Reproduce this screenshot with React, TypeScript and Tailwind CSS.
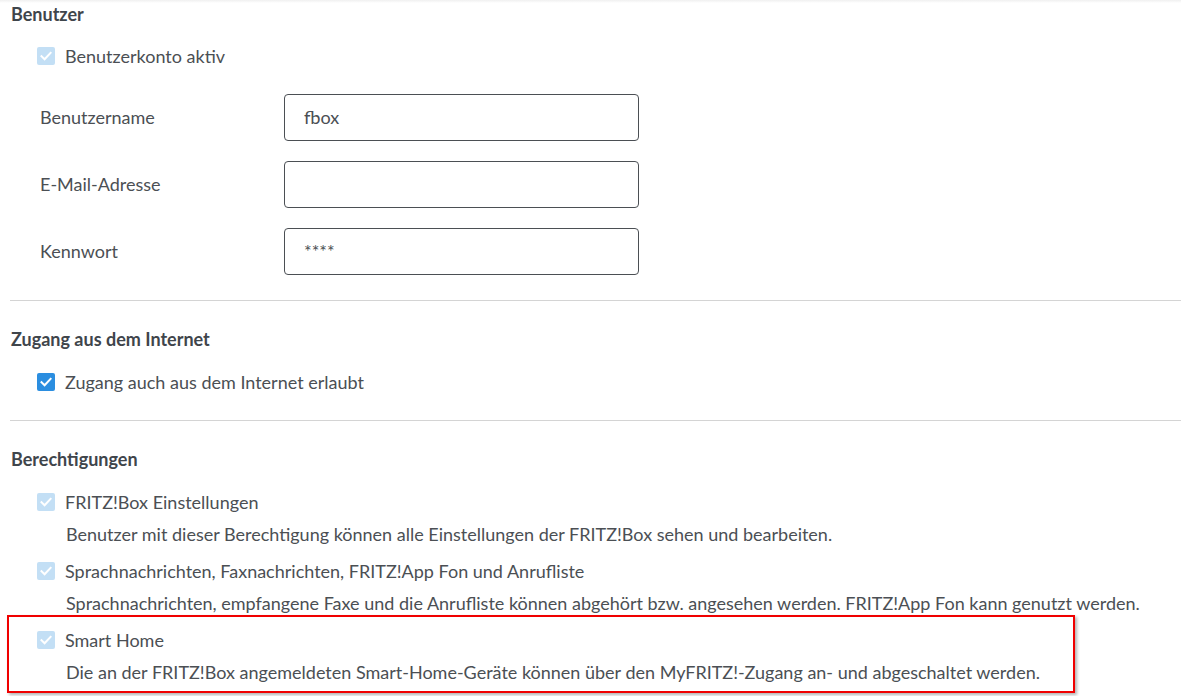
import React from "react";

const font = { fontFamily: "Lato, 'Noto Sans', sans-serif" };

function Check({ enabled }: { enabled?: boolean }) {
  return (
    <span
      className={`inline-flex h-[18px] w-[18px] shrink-0 items-center justify-center rounded-[2px] ${
        enabled ? "bg-[#2b8ee0]" : "bg-[#c3dff5]"
      }`}
    >
      <svg width="14" height="14" viewBox="0 0 14 14" fill="none">
        <path d="M2.5 7.2 L5.6 10.2 L11.6 3.8" stroke="white" strokeWidth="2" strokeLinecap="square" />
      </svg>
    </span>
  );
}

function Field({ label, value }: { label: string; value: string }) {
  return (
    <div className="flex h-[47px] items-center">
      <div className="w-[284px] pl-[40px] text-[18px] text-[#4b4f54]">{label}</div>
      <div className="flex h-[47px] w-[355px] items-center rounded-[4px] border border-[#4b4f54] px-[19px] text-[18px] text-[#4b4f54]">
        {value}
      </div>
    </div>
  );
}

function Perm({ title, desc }: { title: string; desc: string }) {
  return (
    <div className="pl-[37px]">
      <div className="flex h-[24px] items-center gap-[10px] text-[18px] text-[#4b4f54]">
        <Check />
        <span>{title}</span>
      </div>
      <div className="mt-[8px] pl-[29px] text-[18px] leading-[24px] text-[#4b4f54]">{desc}</div>
    </div>
  );
}

export default function App() {
  return (
    <div className="relative h-[696px] w-[1181px] overflow-hidden bg-white" style={font}>
      <div className="h-[3px] w-full bg-gradient-to-b from-[#f0f0f0] to-white" />
      <div className="pl-[10px]">
        <div className="pl-[1px] text-[18px] font-bold leading-[22px] text-[#3f454b]">Benutzer</div>
        <div className="mt-[19px] flex h-[24px] items-center gap-[10px] pl-[27px] text-[18px] text-[#4b4f54]">
          <Check />
          <span>Benutzerkonto aktiv</span>
        </div>
        <div className="mt-[26px] flex flex-col gap-[20px]">
          <div className="-ml-[10px]">
            <Field label="Benutzername" value="fbox" />
          </div>
          <div className="-ml-[10px]">
            <Field label="E-Mail-Adresse" value="" />
          </div>
          <div className="-ml-[10px]">
            <Field label="Kennwort" value="****" />
          </div>
        </div>
        <div className="mt-[25px] h-px bg-[#d4d4d4]" />
        <div className="mt-[27px] pl-[1px] text-[18px] font-bold leading-[22px] text-[#3f454b]">Zugang aus dem Internet</div>
        <div className="mt-[20px] flex h-[24px] items-center gap-[10px] pl-[27px] text-[18px] text-[#4b4f54]">
          <Check enabled />
          <span>Zugang auch aus dem Internet erlaubt</span>
        </div>
        <div className="mt-[26px] h-px bg-[#d4d4d4]" />
        <div className="mt-[27px] pl-[1px] text-[18px] font-bold leading-[22px] text-[#3f454b]">Berechtigungen</div>
        <div className="mt-[20px] flex flex-col gap-[13px] -ml-[10px]">
          <Perm
            title="FRITZ!Box Einstellungen"
            desc="Benutzer mit dieser Berechtigung können alle Einstellungen der FRITZ!Box sehen und bearbeiten."
          />
          <Perm
            title="Sprachnachrichten, Faxnachrichten, FRITZ!App Fon und Anrufliste"
            desc="Sprachnachrichten, empfangene Faxe und die Anrufliste können abgehört bzw. angesehen werden. FRITZ!App Fon kann genutzt werden."
          />
          <Perm
            title="Smart Home"
            desc="Die an der FRITZ!Box angemeldeten Smart-Home-Geräte können über den MyFRITZ!-Zugang an- und abgeschaltet werden."
          />
        </div>
      </div>
      <div className="pointer-events-none absolute left-[7px] top-[615px] h-[78px] w-[1068px] border-2 border-[#f00000] shadow-[2px_2px_3px_rgba(0,0,0,0.3)]" />
    </div>
  );
}
